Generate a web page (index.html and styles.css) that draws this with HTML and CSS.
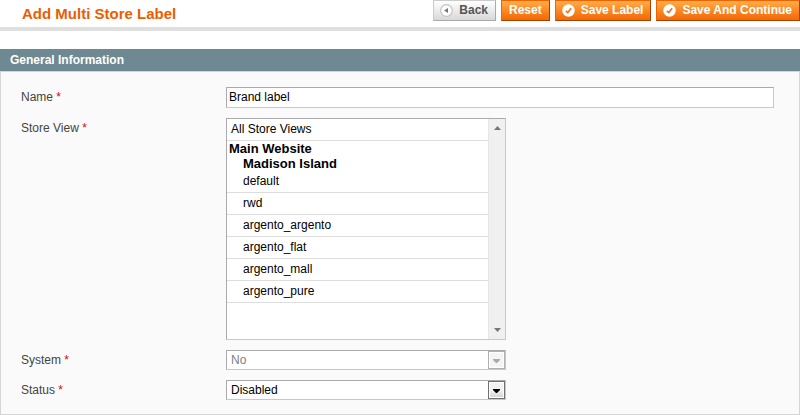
FILE: index.html
```html
<!DOCTYPE html>
<html lang="en">
<head>
<meta charset="utf-8">
<title>Add Multi Store Label</title>
<link rel="stylesheet" href="styles.css">
</head>
<body>
<header class="content-header">
  <h1>Add Multi Store Label</h1>
  <div class="buttons">
    <button type="button" class="btn back"><svg width="13" height="13" viewBox="0 0 13 13" aria-hidden="true"><circle cx="6.500" cy="6.500" r="5.800" fill="#fff" stroke="#c4c4c4" stroke-width="1.200"/><path d="M4 6.500L8 4v5z" fill="#777"/></svg>Back</button>
    <button type="button" class="btn">Reset</button>
    <button type="button" class="btn"><svg width="13" height="13" viewBox="0 0 13 13" aria-hidden="true"><circle cx="6.500" cy="6.500" r="6.200" fill="#fff"/><path d="M3.800 6.800L5.800 8.600L9.200 4.300" fill="none" stroke="#e87722" stroke-width="1.700"/></svg>Save Label</button>
    <button type="button" class="btn"><svg width="13" height="13" viewBox="0 0 13 13" aria-hidden="true"><circle cx="6.500" cy="6.500" r="6.200" fill="#fff"/><path d="M3.800 6.800L5.800 8.600L9.200 4.300" fill="none" stroke="#e87722" stroke-width="1.700"/></svg>Save And Continue</button>
  </div>
</header>
<main>
  <h2>General Information</h2>
  <form class="panel">
    <div class="row">
      <label for="name">Name <span class="req">*</span></label>
      <input id="name" type="text" value="Brand label">
    </div>
    <div class="row">
      <label for="stores">Store View <span class="req">*</span></label>
      <div class="listbox">
        <select id="stores" multiple>
          <option>All Store Views</option>
          <optgroup label="Main Website"></optgroup>
          <optgroup class="store" label="Madison Island">
            <option>default</option>
            <option>rwd</option>
            <option>argento_argento</option>
            <option>argento_flat</option>
            <option>argento_mall</option>
            <option>argento_pure</option>
          </optgroup>
        </select>
        <div class="track" aria-hidden="true">
          <svg width="7" height="4" viewBox="0 0 7 4"><path d="M0 4L3.500 0L7 4z" fill="#777"/></svg>
          <svg width="7" height="4" viewBox="0 0 7 4"><path d="M0 0L3.500 4L7 0z" fill="#777"/></svg>
        </div>
      </div>
    </div>
    <div class="row">
      <label for="system">System <span class="req">*</span></label>
      <div class="dropdown disabled">
        <select id="system" disabled><option>No</option></select>
        <span class="arrow"><svg width="7" height="4" viewBox="0 0 7 4" aria-hidden="true"><path d="M0 0H7V1L4 4H3L0 1z" fill="currentColor"/></svg></span>
      </div>
    </div>
    <div class="row">
      <label for="status">Status <span class="req">*</span></label>
      <div class="dropdown">
        <select id="status"><option>Disabled</option><option>Enabled</option></select>
        <span class="arrow"><svg width="7" height="4" viewBox="0 0 7 4" aria-hidden="true"><path d="M0 0H7V1L4 4H3L0 1z" fill="currentColor"/></svg></span>
      </div>
    </div>
  </form>
</main>
</body>
</html>
```
FILE: styles.css
```css
* { box-sizing: border-box; }
body {
  margin: 0;
  background: #fff;
  color: #444;
  font: 12px/16px "Liberation Sans", Arial, sans-serif;
}
h1, h2 { margin: 0; font-weight: bold; }
input, select, button { margin: 0; font: inherit; }

.content-header {
  display: flex;
  justify-content: space-between;
  align-items: flex-start;
  padding: 0 0 6px 22px;
  border-bottom: 4px solid #dfdfdf;
  margin-bottom: 18px;
}
h1 { color: #eb5e00; font-size: 15px; line-height: 20px; padding-top: 4px; margin-bottom: -3px; }
.buttons { display: flex; gap: 5px; }
.btn {
  display: flex;
  align-items: center;
  height: 21px;
  padding: 0 7px 1px;
  border: 1px solid;
  border-color: #ed6502 #a04300 #a04300 #ed6502;
  background: linear-gradient(#ffac47, #f77410 80%, #f36a05);
  color: #fff;
  font-weight: bold;
  white-space: nowrap;
}
.btn svg { margin-right: 6px; margin-left: -1px; }
.btn.back {
  border-color: #ccc #aaa #aaa #ccc;
  background: linear-gradient(#fff, #d8d8d8);
  color: #555;
}

h2 {
  height: 22px;
  padding: 0 10px;
  background: #6f8992;
  color: #fff;
  font-size: 12px;
  line-height: 22px;
}
.panel {
  display: flex;
  flex-direction: column;
  gap: 10px;
  padding: 15px 25px 14px 20px;
  border: 1px solid #d6d6d6;
  background: #fafafa;
}
.row { display: flex; align-items: flex-start; }
label { width: 205px; padding-top: 2px; flex: none; }
.req { color: #d40707; }
input {
  flex: 1;
  min-width: 0;
  height: 21px;
  padding: 0 2px 2px;
  border: 1px solid;
  border-color: #aaa #c8c8c8 #c8c8c8 #aaa;
  background: #fff;
  color: #000;
}

.listbox, .dropdown {
  display: flex;
  width: 280px;
  border: 1px solid;
  border-color: #aaa #c8c8c8 #c8c8c8 #aaa;
  background: #fff;
}
.listbox { height: 222px; }
select {
  flex: 1;
  min-width: 0;
  appearance: none;
  border: 0;
  border-radius: 0;
  padding: 0;
  background: #fff;
  color: #000;
}
.listbox select { overflow: hidden; }
.listbox option {
  min-height: 22px;
  padding: 3px 4px 0;
  border-bottom: 1px solid #ddd;
}
optgroup { font-size: 13px; font-weight: bold; line-height: 14px; }
.store { margin-top: -2px; text-indent: 14px; }
.store option { padding: 3px 2px 0; font-size: 12px; font-weight: normal; }
.store option:first-child { margin-top: -1px; }
.track {
  display: flex;
  flex-direction: column;
  justify-content: space-between;
  align-items: center;
  width: 17px;
  padding: 7px 0;
  border-left: 1px solid #e6e6e6;
  background: #f0f0f0;
}

.dropdown { height: 20px; }
.dropdown select { padding-left: 4px; opacity: 1; }
.dropdown.disabled select { color: #808080; }
.arrow {
  display: flex;
  align-items: center;
  justify-content: center;
  width: 17px;
  border: 1px solid #707070;
  background: linear-gradient(#f2f2f2 50%, #d2d2d2);
  box-shadow: inset 0 0 0 1px #fff;
  color: #000;
  padding-top: 2px;
}
.disabled .arrow { border-color: #b0b0b0; background: #f4f4f4; color: #aaa; }
```
